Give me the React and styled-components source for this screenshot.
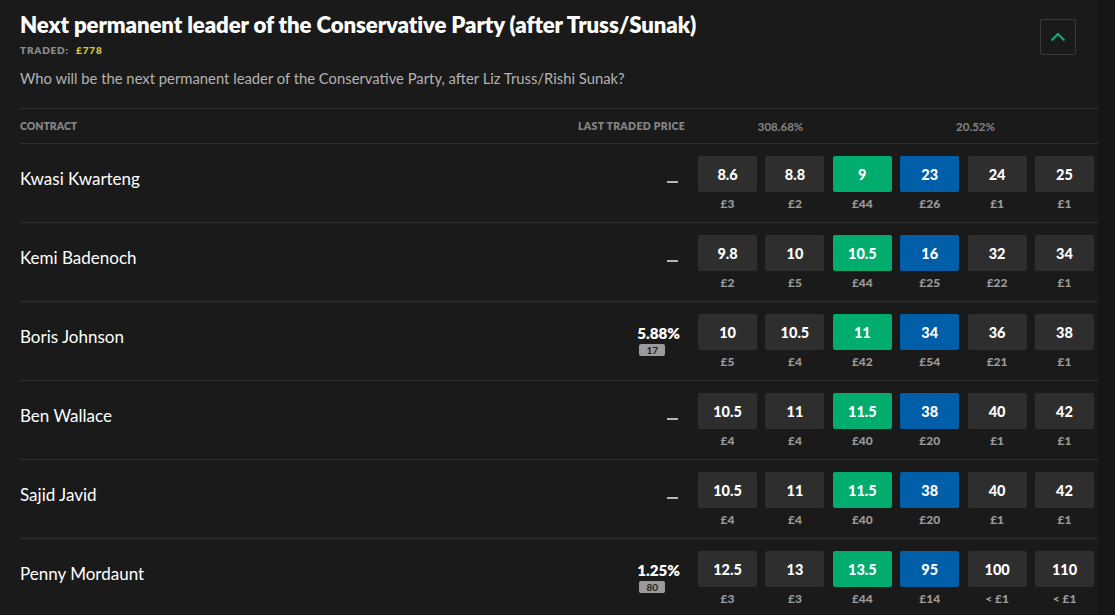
import styled, { createGlobalStyle } from "styled-components"

const GlobalStyle = createGlobalStyle`
    html, body {
        margin: 0;
        padding: 0;
        background: #161616;
    }
    body {
        font-family: Lato, "Open Sans", sans-serif;
        color: #fff;
    }
`

const rows = [
    { name: "Kwasi Kwarteng", ltp: null, prices: ["8.6", "8.8", "9", "23", "24", "25"], stakes: ["£3", "£2", "£44", "£26", "£1", "£1"] },
    { name: "Kemi Badenoch", ltp: null, prices: ["9.8", "10", "10.5", "16", "32", "34"], stakes: ["£2", "£5", "£44", "£25", "£22", "£1"] },
    { name: "Boris Johnson", ltp: { pct: "5.88%", odds: "17" }, prices: ["10", "10.5", "11", "34", "36", "38"], stakes: ["£5", "£4", "£42", "£54", "£21", "£1"] },
    { name: "Ben Wallace", ltp: null, prices: ["10.5", "11", "11.5", "38", "40", "42"], stakes: ["£4", "£4", "£40", "£20", "£1", "£1"] },
    { name: "Sajid Javid", ltp: null, prices: ["10.5", "11", "11.5", "38", "40", "42"], stakes: ["£4", "£4", "£40", "£20", "£1", "£1"] },
    { name: "Penny Mordaunt", ltp: { pct: "1.25%", odds: "80" }, prices: ["12.5", "13", "13.5", "95", "100", "110"], stakes: ["£3", "£3", "£44", "£14", "< £1", "< £1"] },
]

function kindOf(i) {
    if (i === 2) return "back"
    if (i === 3) return "lay"
    return "plain"
}

export default function App() {
    return (
        <>
            <GlobalStyle />
            <Wrapper>
                <Header>
                    <div>
                        <Title>Next permanent leader of the Conservative Party (after Truss/Sunak)</Title>
                        <Traded>TRADED: <span>£778</span></Traded>
                        <Description>Who will be the next permanent leader of the Conservative Party, after Liz Truss/Rishi Sunak?</Description>
                    </div>
                    <Collapse aria-label="collapse">
                        <svg width="16" height="10" viewBox="0 0 16 10">
                            <path d="M1.5 8.5 L8 2 L14.5 8.5" fill="none" stroke="#12a874" strokeWidth="2.2" />
                        </svg>
                    </Collapse>
                </Header>

                <TableHead>
                    <span>CONTRACT</span>
                    <span className="ltp">LAST TRADED PRICE</span>
                    <span className="pct">308.68%</span>
                    <span className="pct">20.52%</span>
                </TableHead>

                {rows.map((r) => (
                    <Row key={r.name}>
                        <Name>{r.name}</Name>
                        <LastTraded>
                            {r.ltp ? (
                                <div className="block">
                                    <p>{r.ltp.pct}</p>
                                    <Badge>{r.ltp.odds}</Badge>
                                </div>
                            ) : (
                                <Dash />
                            )}
                        </LastTraded>
                        <Prices>
                            {r.prices.map((p, i) => (
                                <Cell key={i}>
                                    <PriceButton $kind={kindOf(i)}>{p}</PriceButton>
                                    <Stake>{r.stakes[i]}</Stake>
                                </Cell>
                            ))}
                        </Prices>
                    </Row>
                ))}
            </Wrapper>
        </>
    )
}

const Wrapper = styled.div`
    width: 1098px;
    min-height: 615px;
    background: #1a1a1a;
    box-sizing: border-box;
    padding-left: 20px;
`

const Header = styled.div`
    display: flex;
    justify-content: space-between;
    align-items: flex-start;
    padding: 11px 22px 0 0;
    height: 109px;
    border-bottom: 1px solid #313131;
    box-sizing: border-box;
`

const Title = styled.h1`
    margin: 0;
    font-size: 22.2px;
    font-weight: 800;
    line-height: 28px;
    letter-spacing: -0.1px;
`

const Traded = styled.div`
    margin-top: 5px;
    font-size: 10px;
    font-weight: 800;
    letter-spacing: 0.8px;
    color: #8c8c8c;

    span {
        margin-left: 4px;
        color: #cfc53a;
    }
`

const Description = styled.p`
    margin: 13px 0 0;
    font-size: 14.8px;
    color: #b3b3b3;
`

const Collapse = styled.button`
    width: 36px;
    height: 36px;
    margin-top: 8px;
    background: transparent;
    border: 1px solid #3a3a3a;
    border-radius: 2px;
    display: flex;
    align-items: center;
    justify-content: center;
    padding: 0;
`

const TableHead = styled.div`
    display: grid;
    grid-template-columns: 1fr auto 195px 195px;
    align-items: center;
    height: 34px;
    padding-right: 25px;
    border-bottom: 1px solid #313131;
    font-size: 10.5px;
    font-weight: 800;
    color: #858585;

    .ltp {
        margin-right: -2px;
        letter-spacing: 0.3px;
    }

    .pct {
        text-align: center;
        font-size: 11.5px;
        font-weight: 700;
    }
`

const Row = styled.div`
    display: flex;
    align-items: center;
    height: 78px;
    border-bottom: 1px solid #313131;
    padding-right: 4px;
`

const Name = styled.div`
    flex: 1;
    font-size: 17px;
    margin-top: -10px;
`

const LastTraded = styled.div`
    display: flex;
    justify-content: flex-end;
    margin-right: 18px;

    .block {
        display: flex;
        flex-direction: column;
        align-items: flex-start;
        margin-top: -2px;
    }

    .block p {
        margin: 0 0 0 -2px;
        font-size: 15.2px;
        font-weight: 800;
        line-height: 18px;
    }
`

const Badge = styled.span`
    margin: 2px 0 0 0;
    width: 26px;
    height: 12px;
    border-radius: 2px;
    background: #9b9b9b;
    color: #222;
    font-size: 10px;
    font-weight: 700;
    line-height: 12px;
    text-align: center;
`

const Dash = styled.span`
    display: block;
    width: 11px;
    height: 2px;
    background: #b5b5b5;
    margin: -2px 2px 0 0;
`

const Prices = styled.div`
    display: flex;
    gap: 8.4px;
`

const Cell = styled.div`
    display: flex;
    flex-direction: column;
    align-items: center;
    width: 59px;
`

const buttonColors = {
    plain: "#2e2e2e",
    back: "#00ad6f",
    lay: "#005fa8",
}

const PriceButton = styled.div`
    width: 100%;
    height: 36px;
    border-radius: 2px;
    background: ${(p) => buttonColors[p.$kind]};
    display: flex;
    align-items: center;
    justify-content: center;
    font-size: 14.5px;
    font-weight: 900;
`

const Stake = styled.div`
    margin-top: 6px;
    font-size: 12px;
    font-weight: 900;
    line-height: 12px;
    color: #9a9a9a;
`
